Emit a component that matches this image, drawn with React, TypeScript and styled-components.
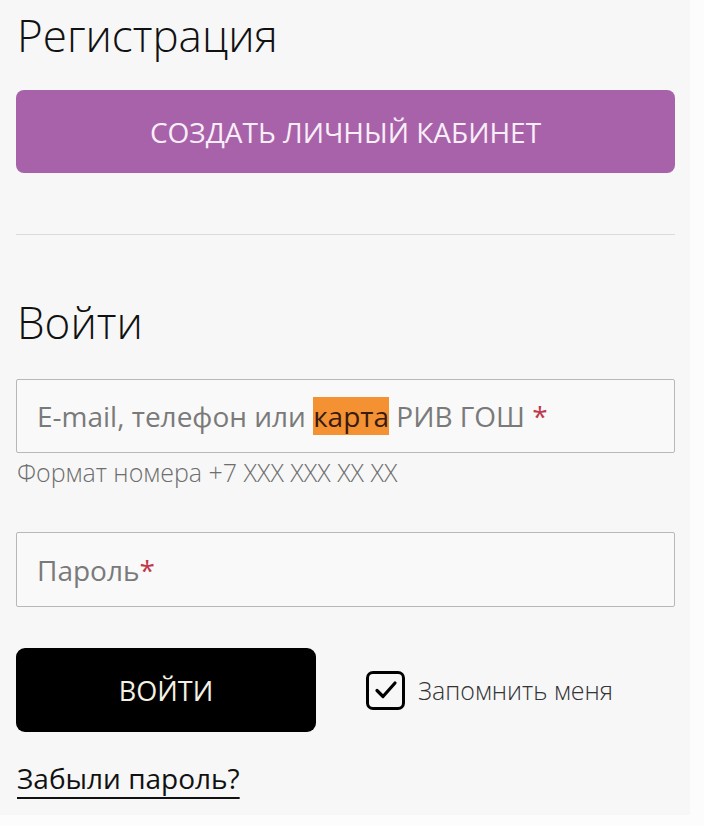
import styled, { createGlobalStyle } from "styled-components";

const GlobalStyle = createGlobalStyle`
  body {
    margin: 0;
    background: #fcfcfc;
    font-family: "Open Sans", "Noto Sans", sans-serif;
  }
`;

const Panel = styled.div`
  width: 690px;
  height: 815px;
  box-sizing: border-box;
  background: #f7f7f7;
  padding: 5px 0 0 16px;
  display: flex;
  flex-direction: column;
  align-items: flex-start;
`;

const Title = styled.h1<{ $top: number }>`
  margin: ${(p) => p.$top}px 0 0 1px;
  font-size: 44px;
  line-height: 60px;
  font-weight: 300;
  color: #111;
`;

const CreateButton = styled.button`
  margin-top: 25px;
  width: 659px;
  height: 83px;
  border: none;
  border-radius: 8px;
  background: #a862a9;
  color: #f8eef8;
  font-family: inherit;
  font-size: 28px;
  font-weight: 400;
  text-transform: uppercase;
  cursor: pointer;
`;

const Divider = styled.hr`
  margin: 61px 0 0;
  width: 659px;
  border: none;
  border-top: 1px solid #dcdcdc;
`;

const Field = styled.div<{ $top: number; $h: number }>`
  margin-top: ${(p) => p.$top}px;
  width: 659px;
  height: ${(p) => p.$h}px;
  box-sizing: border-box;
  border: 1px solid #b8b8b8;
  border-radius: 2px;
  background: #f9f9f9;
  display: flex;
  align-items: center;
  padding-left: 20px;
  font-size: 28px;
  color: #7a7a7a;
  white-space: pre;
`;

const Mark = styled.span`
  background: #f39133;
  color: #3a1a10;
`;

const Star = styled.span`
  color: #c0394b;
`;

const Hint = styled.div`
  margin: 5px 0 0 1px;
  font-size: 25px;
  font-weight: 300;
  line-height: 28px;
  color: #6e6e6e;
`;

const ActionRow = styled.div`
  margin-top: 41px;
  display: flex;
  align-items: center;
`;

const LoginButton = styled.button`
  width: 300px;
  height: 84px;
  border: none;
  border-radius: 9px;
  background: #000;
  color: #f3f0e4;
  font-family: inherit;
  font-size: 27px;
  text-transform: uppercase;
  cursor: pointer;
`;

const Remember = styled.label`
  margin-left: 50px;
  display: flex;
  align-items: center;
  gap: 13px;
  font-size: 25px;
  font-weight: 300;
  color: #333;
`;

const Box = styled.span`
  width: 39px;
  height: 39px;
  box-sizing: border-box;
  border: 3px solid #000;
  border-radius: 7px;
  display: flex;
  align-items: center;
  justify-content: center;
`;

const Forgot = styled.a`
  margin: 27px 0 0 1px;
  font-size: 28px;
  color: #111;
  text-decoration: underline;
  text-decoration-thickness: 2px;
  text-underline-offset: 8px;
  cursor: pointer;
`;

export default function App() {
  return (
    <>
      <GlobalStyle />
      <Panel>
        <Title $top={0}>Регистрация</Title>
        <CreateButton>Создать личный кабинет</CreateButton>
        <Divider />
        <Title $top={57}>Войти</Title>
        <Field $top={27} $h={74}>
          E-mail, телефон или <Mark>карта</Mark> РИВ ГОШ <Star>*</Star>
        </Field>
        <Hint>Формат номера +7 XXX XXX XX XX</Hint>
        <Field $top={46} $h={75}>
          Пароль<Star>*</Star>
        </Field>
        <ActionRow>
          <LoginButton>Войти</LoginButton>
          <Remember>
            <Box>
              <svg width="24" height="24" viewBox="0 0 24 24">
                <path
                  d="M3 12.5l6 6L21 5"
                  fill="none"
                  stroke="#000"
                  strokeWidth="3.2"
                  strokeLinecap="round"
                  strokeLinejoin="round"
                />
              </svg>
            </Box>
            Запомнить меня
          </Remember>
        </ActionRow>
        <Forgot>Забыли пароль?</Forgot>
      </Panel>
    </>
  );
}
